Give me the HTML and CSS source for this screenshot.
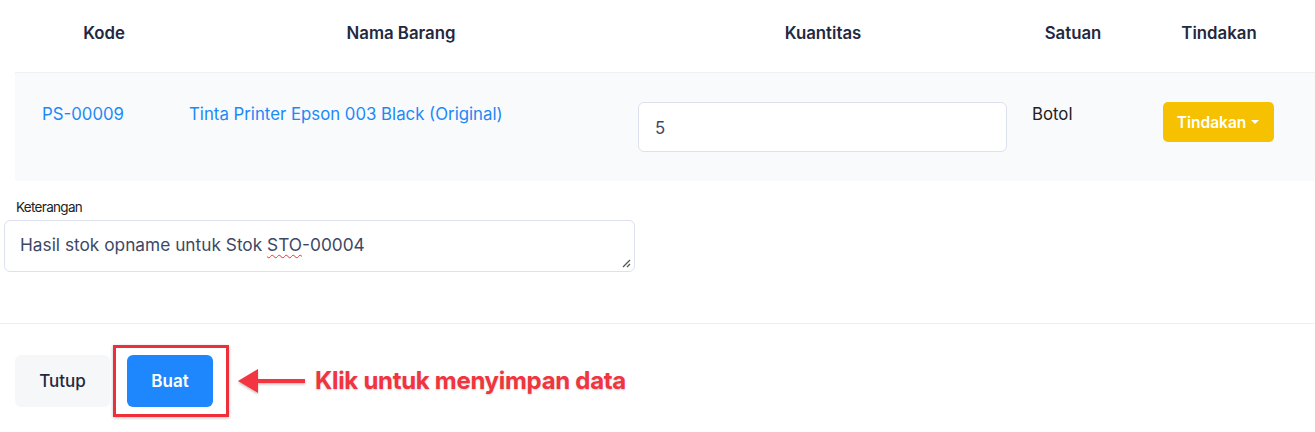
FILE: index.html
```html
<!DOCTYPE html>
<html lang="id">
<head>
<meta charset="utf-8">
<title>Stok Opname</title>
<link rel="stylesheet" href="styles.css">
</head>
<body>
<div class="modal-body">
  <div class="table">
    <div class="grid thead">
      <div class="th th-kode">Kode</div>
      <div class="th">Nama Barang</div>
      <div class="th">Kuantitas</div>
      <div class="th">Satuan</div>
      <div class="th">Tindakan</div>
    </div>
    <div class="grid trow">
      <div class="td td-kode"><a class="link" href="#">PS-00009</a></div>
      <div class="td td-nama"><a class="link" href="#">Tinta Printer Epson 003 Black (Original)</a></div>
      <div class="td td-qty"><div class="input">5</div></div>
      <div class="td td-sat">Botol</div>
      <div class="td td-act"><button class="btn-warning">Tindakan <span class="caret"></span></button></div>
    </div>
  </div>
  <div class="field">
    <label class="label">Keterangan</label>
    <div class="textarea">Hasil stok opname untuk Stok <span class="spell">STO</span>-00004
      <svg class="grip" width="10" height="10" viewBox="0 0 10 10"><path d="M9 2 L2 9 M9 6 L6 9" stroke="#555" stroke-width="1.3" fill="none"/></svg>
    </div>
  </div>
</div>
<div class="modal-footer">
  <button class="btn btn-light">Tutup</button>
  <span class="highlight"><button class="btn btn-primary">Buat</button></span>
  <svg class="arrow" width="72" height="28" viewBox="0 0 72 28">
    <defs>
      <filter id="sh" x="-20%" y="-40%" width="140%" height="180%">
        <feDropShadow dx="0" dy="1.5" stdDeviation="1.2" flood-color="#000" flood-opacity="0.25"/>
      </filter>
    </defs>
    <g filter="url(#sh)">
      <path d="M1 14 L21 2 L21 26 Z" fill="#f2343f"/>
      <rect x="19" y="12" width="49" height="4" fill="#f2343f"/>
    </g>
  </svg>
  <span class="note">Klik untuk menyimpan data</span>
</div>
</body>
</html>
```
FILE: styles.css
```css
* { box-sizing: border-box; }
body {
  margin: 0;
  font-family: Inter, "Noto Sans", sans-serif;
  background: #ffffff;
  color: #1e293b;
}
.table { padding-left: 15px; }
.grid {
  display: grid;
  grid-template-columns: 164px 444px 400px 100px 192px;
}
.thead {
  border-bottom: 1px solid #eef0f3;
  height: 73px;
}
.th {
  text-align: center;
  font-weight: 600;
  font-size: 16.8px;
  line-height: 24px;
  padding-top: 21px;
  color: #1f2940;
}
.th-kode { padding-left: 14px; }
.trow {
  background: #f9fafb;
  height: 108px;
}
.td {
  padding-top: 29px;
  font-size: 16.8px;
  line-height: 24px;
}
.link { color: #1d89f7; text-decoration: none; }
.td-kode { padding-left: 27px; }
.td-nama { padding-left: 10px; }
.td-qty { padding-left: 15px; }
.td-sat { padding-left: 9px; color: #222; }
.td-act { text-align: center; }
.input {
  width: 369px;
  height: 50px;
  background: #fff;
  border: 1px solid #dde1ee;
  border-radius: 6px;
  padding: 0 16px;
  line-height: 50px;
  color: #3d4865;
  font-size: 16.8px;
}
.btn-warning {
  background: #f6c100;
  border: none;
  border-radius: 5px;
  color: #fff;
  font-family: Inter, sans-serif;
  font-weight: 600;
  font-size: 15.5px;
  width: 111px;
  height: 40px;
  margin-left: -2px;
  padding: 0;
}
.caret {
  display: inline-block;
  width: 0; height: 0;
  border-left: 4px solid transparent;
  border-right: 4px solid transparent;
  border-top: 4px solid #fff;
  vertical-align: middle;
  margin-left: 1px;
  margin-top: -2px;
}
.field {
  padding-top: 17px;
  padding-bottom: 51px;
  border-bottom: 1px solid #eeeeee;
}
.label {
  display: block;
  font-size: 13.5px;
  line-height: 18px;
  color: #222;
  padding-left: 16px;
  letter-spacing: -0.7px;
}
.textarea {
  position: relative;
  margin: 4px 0 0 4px;
  width: 631px;
  height: 52px;
  border: 1px solid #dde1ee;
  border-radius: 6px;
  padding: 12px 15px;
  font-size: 17.3px;
  line-height: 24px;
  color: #3d4865;
}
.spell {
  text-decoration: underline wavy #e53935;
  text-decoration-thickness: 1px;
  text-underline-offset: 3px;
}
.grip { position: absolute; right: 3px; bottom: 3px; }
.modal-footer {
  display: flex;
  align-items: center;
  padding: 8px 0 0 15px;
  height: 105px;
}
.btn {
  border: none;
  border-radius: 6px;
  height: 52px;
  font-family: Inter, sans-serif;
  font-size: 17px;
  padding: 0;
}
.btn-light {
  background: #f6f7f8;
  color: #1f2940;
  width: 95px;
  font-weight: 500;
}
.highlight {
  display: inline-flex;
  margin-left: 3px;
  border: 3px solid #ee2f3a;
  padding: 7px 13px 7px 11px;
  box-shadow: 0 1px 3px rgba(0,0,0,0.25);
}
.btn-primary {
  background: #1e87fd;
  color: #fff;
  width: 86px;
  font-weight: 600;
}
.arrow { margin-left: 8px; }
.note {
  margin-left: 6px;
  color: #f2343f;
  font-weight: 700;
  font-size: 24px;
  letter-spacing: -0.3px;
  text-shadow: 0 1px 2px rgba(0,0,0,0.2);
}
```
